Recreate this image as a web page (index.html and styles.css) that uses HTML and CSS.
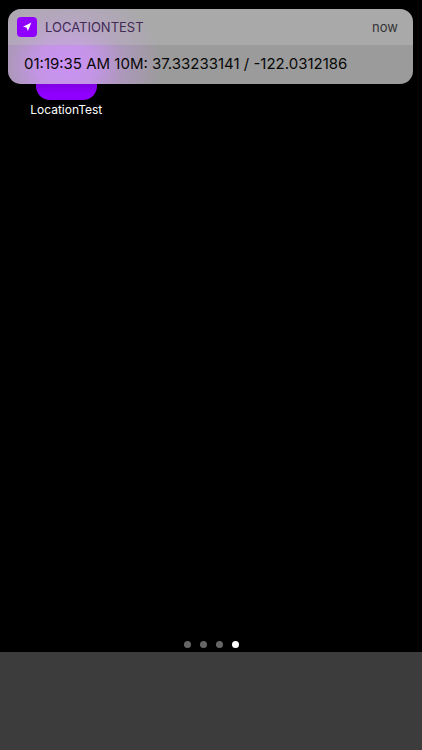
FILE: index.html
```html
<!DOCTYPE html>
<html lang="en">
<head>
<meta charset="utf-8">
<meta name="viewport" content="width=device-width, initial-scale=1">
<title>Home</title>
<link rel="stylesheet" href="styles.css">
</head>
<body>
<div class="screen">
  <section class="banner">
    <header class="banner-header">
      <svg class="banner-icon" viewBox="0 0 20 20" aria-hidden="true">
        <rect width="20" height="20" rx="4" fill="#9000ff"/>
        <path d="M14.4 5.6 6 9.8 9.5 10.6 10.9 14Z" fill="#fff"/>
      </svg>
      <span class="banner-app">LOCATIONTEST</span>
      <time class="banner-time">now</time>
    </header>
    <p class="banner-body">01:19:35 AM 10M: 37.33233141 / -122.0312186</p>
  </section>
  <main class="apps">
    <a class="app" href="#">
      <span class="app-icon"></span>
      <span class="app-name">LocationTest</span>
    </a>
  </main>
  <nav class="pages">
    <span class="dot"></span>
    <span class="dot"></span>
    <span class="dot"></span>
    <span class="dot dot-current"></span>
  </nav>
  <footer class="dock"></footer>
</div>
</body>
</html>
```
FILE: styles.css
```css
* {
  box-sizing: border-box;
}

body {
  margin: 0;
  background: #000;
  font-family: Inter, "Liberation Sans", sans-serif;
}

.screen {
  position: relative;
  display: flex;
  flex-direction: column;
  min-height: 100vh;
}

/* The notification lies over the app grid. */
.banner {
  position: absolute;
  top: 9px;
  left: 8px;
  right: 9px;
  overflow: hidden;
  border-radius: 13px;
  background:
    radial-gradient(ellipse 96px 84px at 58px 56px, #cb92f4 0%, rgba(200, 148, 238, 0.9) 30%, rgba(184, 150, 208, 0.6) 60%, rgba(155, 155, 155, 0) 100%),
    #9b9b9b;
}

.banner-header {
  display: flex;
  align-items: center;
  gap: 8px;
  height: 36px;
  padding: 0 15px 0 9px;
  background: rgba(190, 190, 190, 0.4);
  font-size: 13px;
}

.banner-icon {
  width: 20px;
  height: 20px;
}

.banner-app {
  color: #422a55;
}

.banner-time {
  margin-left: auto;
  color: #333;
}

.banner-body {
  margin: 0;
  padding: 8px 16px 9px;
  color: #080808;
  font-size: 15px;
  line-height: 22px;
}

.apps {
  display: grid;
  grid-template-columns: repeat(4, 1fr);
  flex: 1;
  align-items: start;
  padding: 39px 18px 0;
}

.app {
  display: flex;
  flex-direction: column;
  align-items: center;
  color: #fff;
  font-size: 12px;
  line-height: 20px;
  text-decoration: none;
}

.app-icon {
  width: 61px;
  height: 61px;
  border-radius: 14px;
  background: linear-gradient(#7c00dc 70%, #9000ff 90%);
}

.pages {
  display: flex;
  justify-content: center;
  gap: 9px;
  padding-bottom: 4px;
}

.dot {
  width: 7px;
  height: 7px;
  border-radius: 50%;
  background: #666;
}

.dot-current {
  background: #fff;
}

.dock {
  height: 98px;
  background: #3c3c3c;
}
```
